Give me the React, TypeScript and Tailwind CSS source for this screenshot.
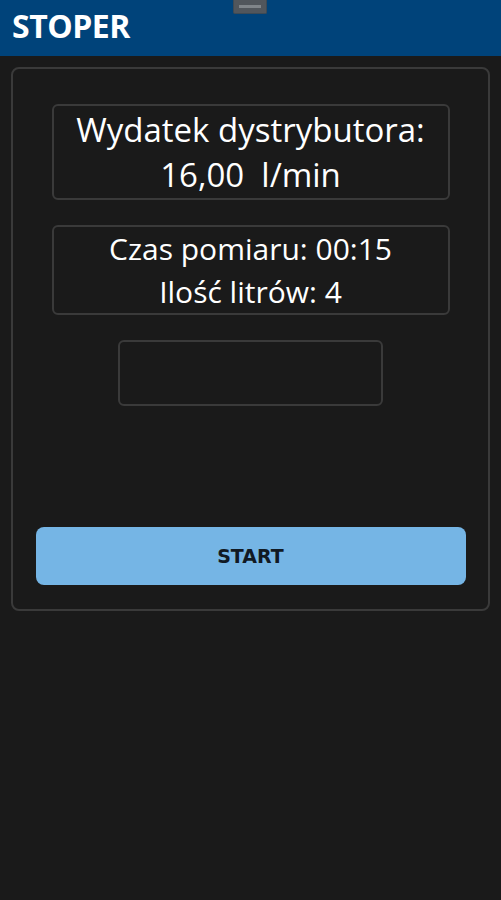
export default function App() {
  return (
    <div className="min-h-[900px] w-full bg-[#1a1a1a] font-['Open_Sans',sans-serif]">
      <header className="relative flex h-14 items-center bg-[#00437a] px-3">
        <h1 className="-mt-[4px] text-[32px] font-bold tracking-[-0.5px] text-white">STOPER</h1>
        <div className="absolute left-[233px] top-0 flex h-[14px] w-[34px] items-center justify-center rounded-b-[2px] border border-t-0 border-[#3e4a55] bg-[#51565c]">
          <div className="h-[3px] w-[22px] bg-[#80858a]" />
        </div>
      </header>

      <main className="mx-[11px] mt-[11px] flex flex-col items-center rounded-lg border-2 border-[#3a3a3a] pb-[24px] pt-[35px]">
        <div className="flex h-[96px] w-[398px] flex-col items-center justify-center rounded-md border-2 border-[#3a3a3a] text-[33px] leading-[45px] text-white">
          <span>Wydatek dystrybutora:</span>
          <span className="whitespace-pre">16,00  l/min</span>
        </div>

        <div className="mt-[25px] flex h-[90px] w-[398px] flex-col items-center justify-center rounded-md border-2 border-[#3a3a3a] text-[30px] leading-[43px] text-white">
          <span>Czas pomiaru: 00:15</span>
          <span>Ilość litrów: 4</span>
        </div>

        <div className="mt-[25px] h-[66px] w-[265px] rounded-md border-2 border-[#3a3a3a]" />

        <button className="mt-[121px] h-[58px] w-[430px] rounded-lg bg-[#75b5e5] font-['DejaVu_Sans',sans-serif] text-[19px] font-bold text-[#111a24]">
          START
        </button>
      </main>
    </div>
  );
}
